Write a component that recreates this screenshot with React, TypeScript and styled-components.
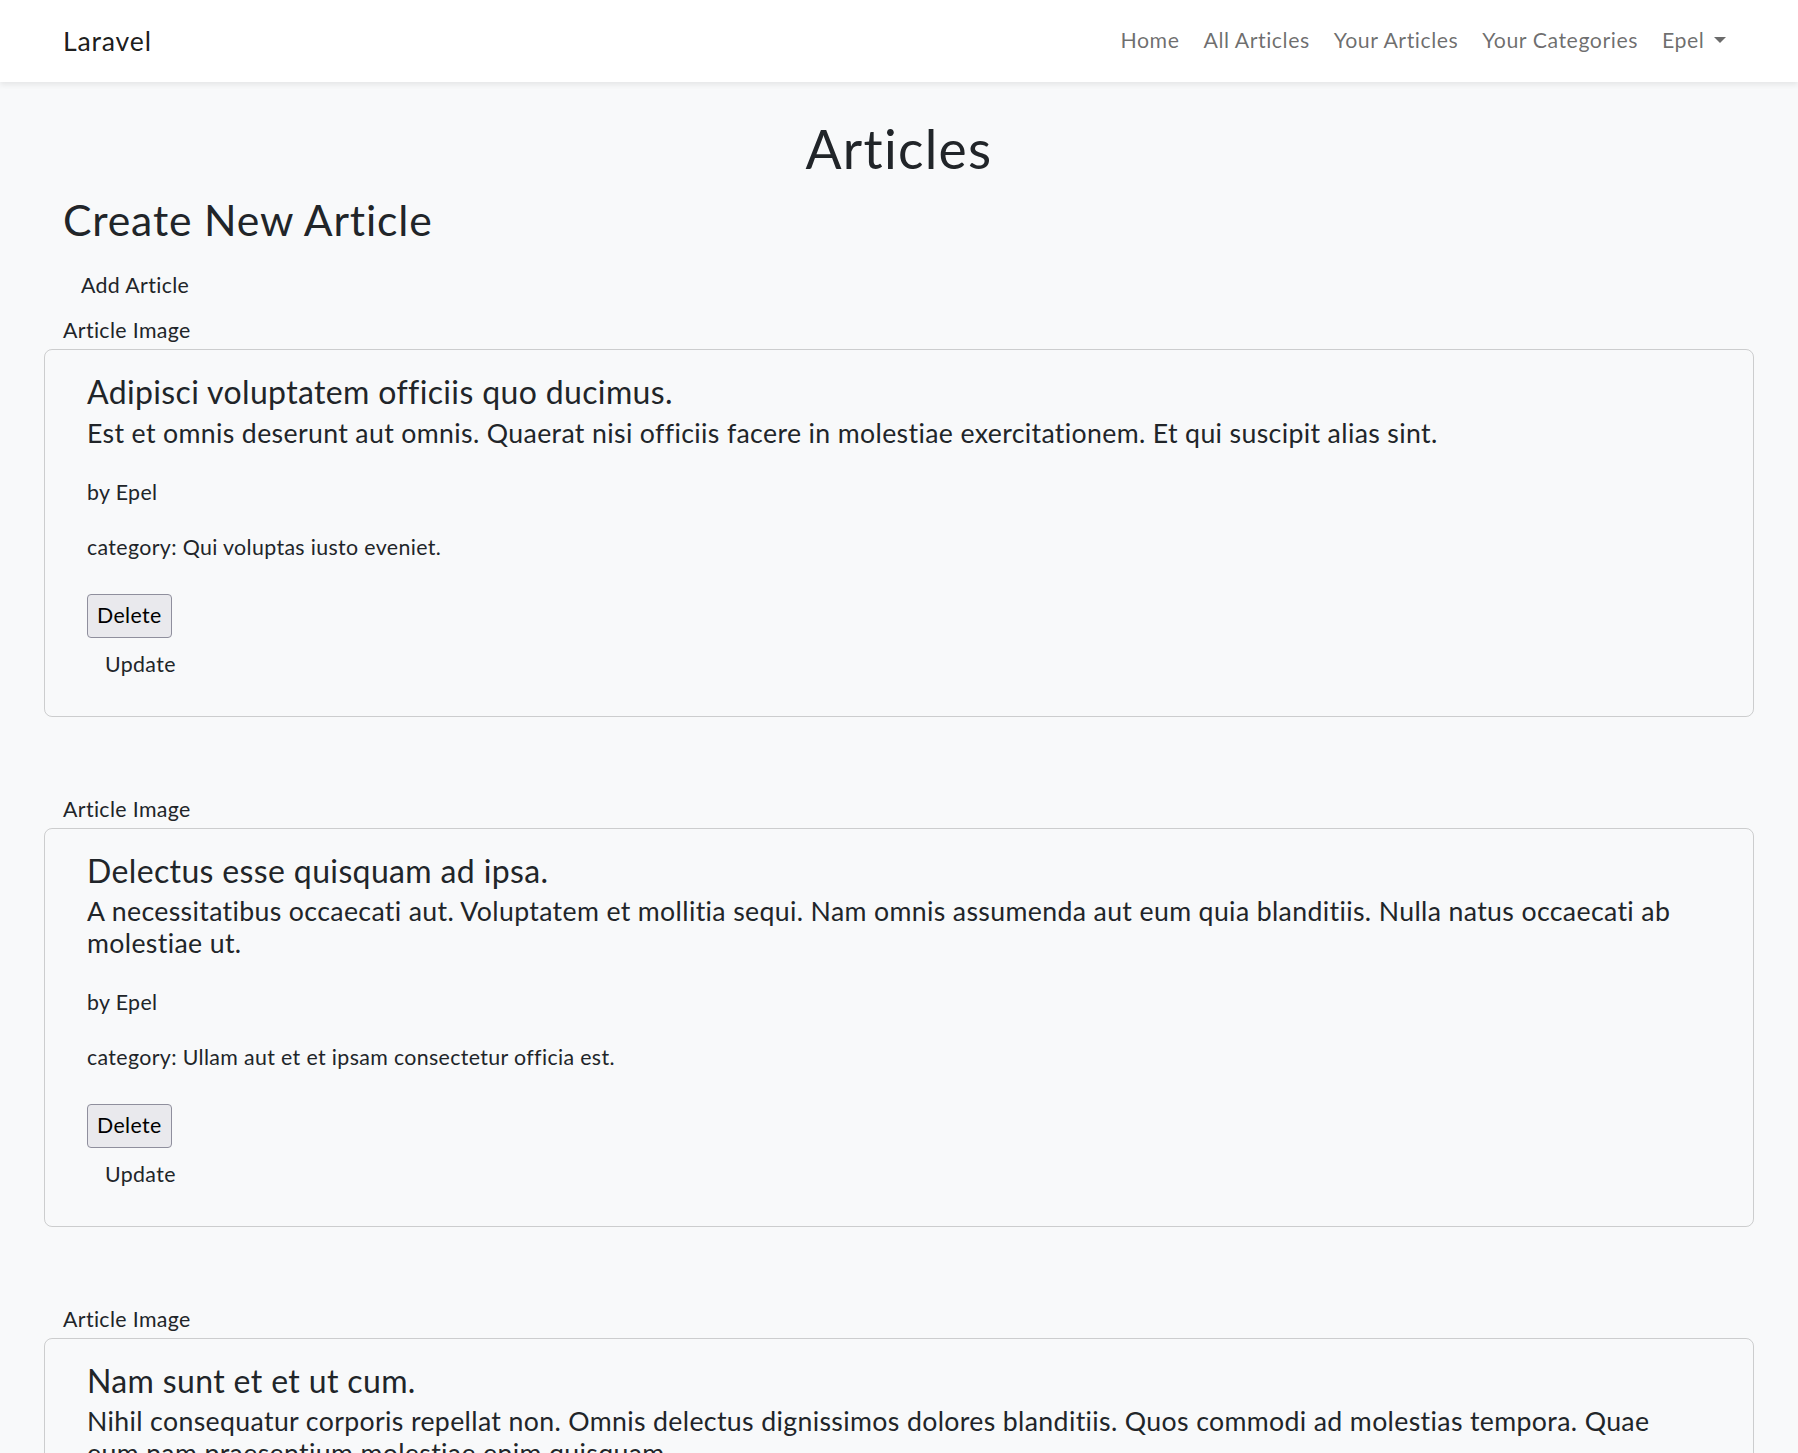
import React from 'react'
import styled, { createGlobalStyle } from 'styled-components'

const GlobalStyle = createGlobalStyle`
  * { box-sizing: border-box; }
  body {
    margin: 0;
    background: #f8f9fa;
    color: #212529;
    font-family: Lato, "Noto Sans", sans-serif;
    font-size: 21.33px;
    line-height: 1.5;
    letter-spacing: 0.017em;
  }
`;

const Navbar = styled.header`
  height: 82px;
  background: #fff;
  box-shadow: 0 2.67px 5.33px rgba(0, 0, 0, 0.075);
  display: flex;
  align-items: center;
  justify-content: space-between;
  padding: 0 60px 0 63px;
`;

const Brand = styled.a`
  font-size: 26.67px;
  line-height: 32px;
  letter-spacing: 0.03em;
  color: rgba(0, 0, 0, 0.9);
  text-decoration: none;
`;

const NavList = styled.ul`
  display: flex;
  list-style: none;
  margin: 0;
  padding: 0 0 2px;

  a {
    display: block;
    padding: 0 12px;
    line-height: 32px;
    letter-spacing: 0.025em;
    color: rgba(0, 0, 0, 0.58);
    text-decoration: none;
  }

  .dropdown::after {
    content: '';
    display: inline-block;
    margin-left: 0.45em;
    vertical-align: 0.255em;
    border-top: 0.3em solid;
    border-right: 0.3em solid transparent;
    border-left: 0.3em solid transparent;
    border-bottom: 0;
  }
`;

const Main = styled.main`
  padding: 34px 44px 60px;
`;

const Header = styled.div`
  padding: 0 19px;
`;

const PageTitle = styled.h1`
  margin: 0 0 14px;
  text-align: center;
  font-size: 53.33px;
  line-height: 64px;
  font-weight: 400;
  letter-spacing: 0.024em;
`;

const SectionTitle = styled.h2`
  margin: 0 0 15px;
  font-size: 42.67px;
  line-height: 51.2px;
  font-weight: 400;
  letter-spacing: 0.02em;
`;

const GhostButton = styled.a`
  display: inline-block;
  padding: 8px 17px;
  border: 1px solid transparent;
  line-height: 32px;
  color: #212529;
  text-decoration: none;
  cursor: pointer;
`;

const Block = styled.section`
  margin-top: 4px;

  & + & {
    margin-top: 76px;
  }
`;

const ImageLabel = styled.div`
  padding-left: 19px;
  line-height: 32px;
  margin-bottom: 3px;
`;

const Card = styled.div`
  border: 1px solid rgba(0, 0, 0, 0.175);
  border-radius: 8px;
  padding: 23px 50px 27px 42px;
`;

const CardTitle = styled.h4`
  margin: 0;
  font-size: 32px;
  line-height: 38.4px;
  font-weight: 400;
`;

const CardText = styled.h5`
  margin: 5px 0 0;
  font-size: 26.67px;
  line-height: 32px;
  font-weight: 400;
`;

const Meta = styled.p<{ $gap: number }>`
  margin: ${p => p.$gap}px 0 0;
  line-height: 32px;
`;

const DeleteButton = styled.button`
  display: block;
  margin-top: 31px;
  padding: 4px 9px 6px;
  background: #e9e9ed;
  border: 1px solid #8f8f9d;
  border-radius: 4px;
  font: inherit;
  letter-spacing: inherit;
  line-height: 32px;
  color: #000;
`;

const UpdateRow = styled.div`
  margin-top: 1px;
`;

interface Article {
  id: number
  title: string
  body: string
  author: string
  category: string
}

const articles: Article[] = [
  {
    id: 1,
    title: 'Adipisci voluptatem officiis quo ducimus.',
    body: 'Est et omnis deserunt aut omnis. Quaerat nisi officiis facere in molestiae exercitationem. Et qui suscipit alias sint.',
    author: 'Epel',
    category: 'Qui voluptas iusto eveniet.',
  },
  {
    id: 2,
    title: 'Delectus esse quisquam ad ipsa.',
    body: 'A necessitatibus occaecati aut. Voluptatem et mollitia sequi. Nam omnis assumenda aut eum quia blanditiis. Nulla natus occaecati ab molestiae ut.',
    author: 'Epel',
    category: 'Ullam aut et et ipsam consectetur officia est.',
  },
  {
    id: 3,
    title: 'Nam sunt et et ut cum.',
    body: 'Nihil consequatur corporis repellat non. Omnis delectus dignissimos dolores blanditiis. Quos commodi ad molestias tempora. Quae eum nam praesentium molestiae enim quisquam.',
    author: 'Epel',
    category: 'Et quia sint aut.',
  },
];

export default function App() {
  return (
    <>
      <GlobalStyle />
      <Navbar>
        <Brand href="#">Laravel</Brand>
        <NavList>
          <li><a href="#">Home</a></li>
          <li><a href="#">All Articles</a></li>
          <li><a href="#">Your Articles</a></li>
          <li><a href="#">Your Categories</a></li>
          <li><a href="#" className="dropdown">Epel</a></li>
        </NavList>
      </Navbar>

      <Main>
        <Header>
          <PageTitle>Articles</PageTitle>
          <SectionTitle>Create New Article</SectionTitle>
          <GhostButton href="#">Add Article</GhostButton>
        </Header>

        {articles.map(a => (
          <Block key={a.id}>
            <ImageLabel>Article Image</ImageLabel>
            <Card>
              <CardTitle>{a.title}</CardTitle>
              <CardText>{a.body}</CardText>
              <Meta $gap={27}>by {a.author}</Meta>
              <Meta $gap={23}>category: {a.category}</Meta>
              <DeleteButton type="button">Delete</DeleteButton>
              <UpdateRow>
                <GhostButton href="#">Update</GhostButton>
              </UpdateRow>
            </Card>
          </Block>
        ))}
      </Main>
    </>
  )
}
